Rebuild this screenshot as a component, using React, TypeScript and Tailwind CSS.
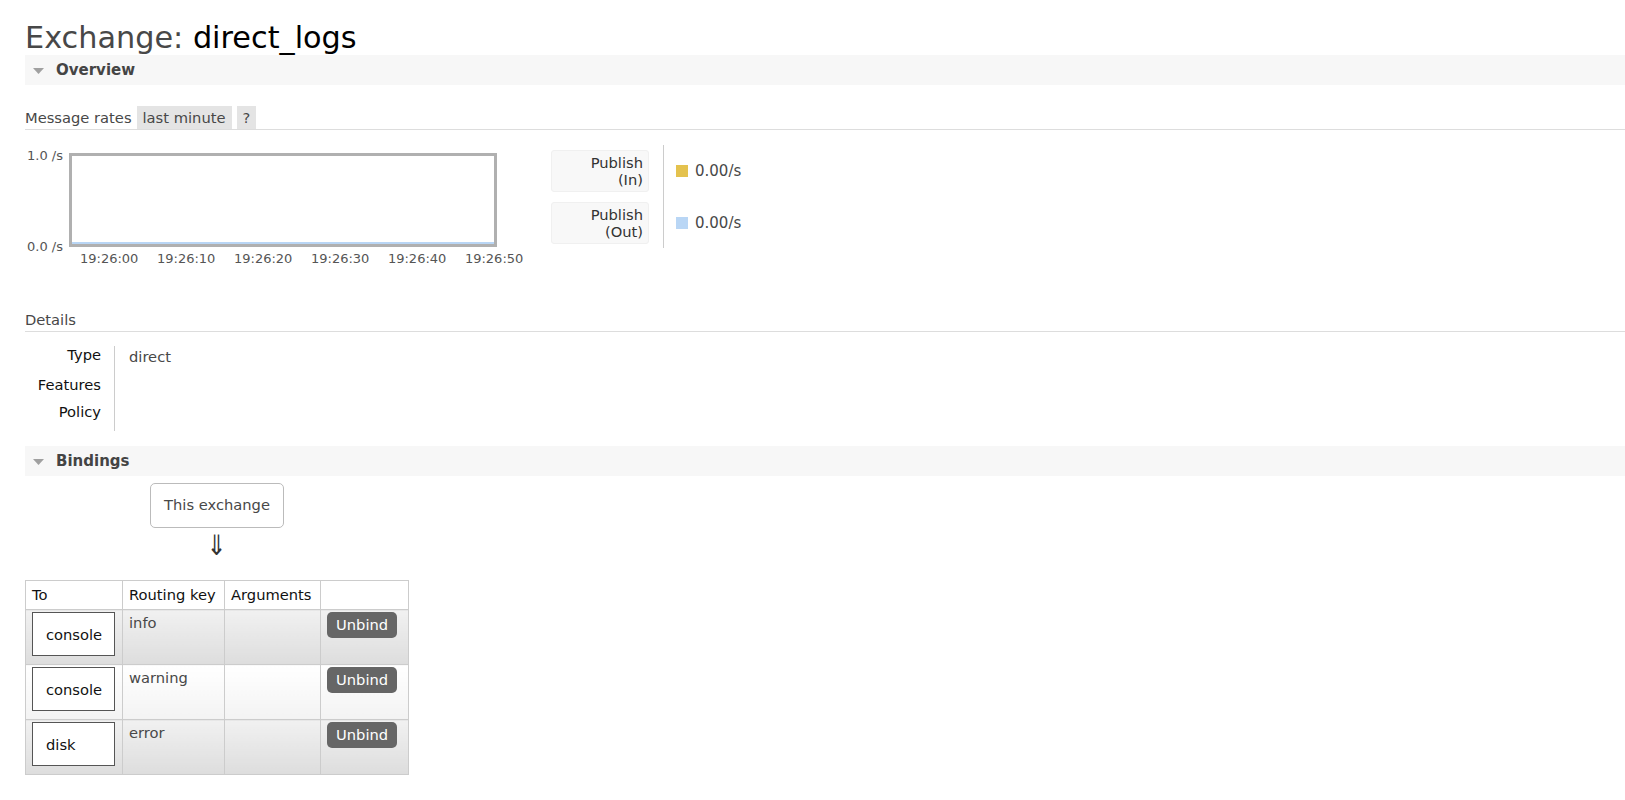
import React from 'react';

const ticks = ['19:26:00', '19:26:10', '19:26:20', '19:26:30', '19:26:40', '19:26:50'];

const bindings = [
  { to: 'console', key: 'info', alt: true },
  { to: 'console', key: 'warning', alt: false },
  { to: 'disk', key: 'error', alt: true },
];

const SectionHeader: React.FC<{ title: string }> = ({ title }) => (
  <div className="flex h-[30px] items-center bg-[#f7f7f7]">
    <svg width="11" height="6" viewBox="0 0 11 6" className="ml-[8px] translate-y-[1px]">
      <polygon points="0,0 11,0 5.5,6" fill="#a0a0a0" />
    </svg>
    <span className="ml-[12px] text-[15px] font-bold text-[#444]">{title}</span>
  </div>
);

const RateChart: React.FC = () => (
  <div className="relative w-[500px] pl-[44px] pt-[8px] text-[13px] leading-[17px] text-[#555]">
    <span className="absolute left-0 top-[2px] w-[38px] whitespace-nowrap text-right">1.0 /s</span>
    <span className="absolute left-0 top-[93px] w-[38px] whitespace-nowrap text-right">0.0 /s</span>
    <div className="flex h-[94px] w-[428px] flex-col justify-end border-[3px] border-[#b0b0b0] bg-white">
      <div className="h-[2px] bg-[#b9d6f5]" />
    </div>
    <div className="mt-[3px] flex gap-[18.6px] whitespace-nowrap pl-[11px]">
      {ticks.map((t) => (
        <span key={t}>{t}</span>
      ))}
    </div>
  </div>
);

const App: React.FC = () => {
  return (
    <div className="min-h-screen bg-white pl-[25px] pt-[21px] font-['DejaVu_Sans','Liberation_Sans',sans-serif] text-[14.7px] text-[#484848]">
      <h1 className="text-[30.3px] font-normal leading-[34px] text-[#484848]">
        Exchange: <span className="text-black">direct_logs</span>
      </h1>

      <SectionHeader title="Overview" />

      <div className="mt-[21px] flex h-[24px] items-stretch border-b border-[#ddd]">
        <span className="self-center leading-[17px]">Message rates</span>
        <span className="ml-[5px] bg-[#e4e4e4] px-[6px] leading-[23px]">last minute</span>
        <span className="ml-[5px] bg-[#e4e4e4] px-[6px] leading-[23px]">?</span>
      </div>

      <div className="mt-[15px] flex items-start">
        <RateChart />
        <div className="ml-[26px] flex items-start">
          <div className="flex flex-col gap-[10px] pt-[5px]">
            {['(In)', '(Out)'].map((s) => (
              <div
                key={s}
                className="h-[42px] w-[98px] rounded-[3px] border border-[#f0f0f0] bg-[#f8f8f8] pr-[5px] pt-[3px] text-right leading-[17px] text-[#333]"
              >
                <div>Publish</div>
                <div>{s}</div>
              </div>
            ))}
          </div>
          <div className="ml-[14px] flex h-[103px] flex-col gap-[10px] border-l border-[#ccc] pl-[12px] pt-[5px]">
            {['bg-[#e4c24e]', 'bg-[#b9d6f5]'].map((c, i) => (
              <div key={i} className="flex h-[42px] items-center gap-[7px] text-[15px]">
                <span className={`h-[12px] w-[12px] ${c}`} />
                <span>0.00/s</span>
              </div>
            ))}
          </div>
        </div>
      </div>

      <div className="mt-[41px] flex h-[24px] items-center border-b border-[#ddd]">
        <span className="leading-[17px]">Details</span>
      </div>

      <div className="mt-[14px] flex leading-[17px]">
        <div className="flex w-[89px] flex-col items-end pb-[11px] pr-[13px] text-[#111]">
          <span className="mb-[13px]">Type</span>
          <span className="mb-[10px]">Features</span>
          <span>Policy</span>
        </div>
        <div className="border-l border-[#ccc] pl-[14px] pt-[2px]">direct</div>
      </div>

      <div className="mt-[15px]">
        <SectionHeader title="Bindings" />
      </div>

      <div className="ml-[125px] mt-[7px] flex h-[45px] w-[134px] items-center justify-center rounded-[5px] border border-[#bbb]">
        This exchange
      </div>
      <div className="ml-[125px] flex h-[52px] w-[134px] justify-center">
        <span className="mt-[3px] inline-block scale-x-[0.85] text-[28px] leading-[30px] text-[#333]">⇓</span>
      </div>

      <table className="w-[384px] table-fixed border-collapse">
        <thead>
          <tr className="h-[29px]">
            <th className="w-[97px] border border-[#ccc] px-[6px] text-left font-normal text-[#111]">To</th>
            <th className="w-[102px] border border-[#ccc] px-[6px] text-left font-normal text-[#111]">Routing key</th>
            <th className="w-[96px] border border-[#ccc] px-[6px] text-left font-normal text-[#111]">Arguments</th>
            <th className="w-[88px] border border-[#ccc] px-[6px]" />
          </tr>
        </thead>
        <tbody>
          {bindings.map((b, i) => {
            const bg = b.alt
              ? 'bg-linear-to-b from-[#f1f1f1] to-[#dddddd]'
              : 'bg-linear-to-b from-white to-[#f3f3f3]';
            return (
              <tr key={i} className="h-[55px]">
                <td className={`border border-[#ccc] px-[6px] pt-[2px] pb-[8px] align-top ${bg}`}>
                  <div className="flex h-[44px] w-[83px] items-center border border-[#555] bg-white pl-[13px] pt-[2px] text-[#111]">
                    {b.to}
                  </div>
                </td>
                <td className={`border border-[#ccc] px-[6px] pt-[4px] align-top leading-[17px] ${bg}`}>{b.key}</td>
                <td className={`border border-[#ccc] px-[6px] align-top ${bg}`} />
                <td className={`border border-[#ccc] px-[6px] pt-[2px] align-top ${bg}`}>
                  <span className="inline-block h-[26px] rounded-[5px] bg-[#666] px-[9px] leading-[26px] text-white">
                    Unbind
                  </span>
                </td>
              </tr>
            );
          })}
        </tbody>
      </table>
    </div>
  );
};

export default App;
